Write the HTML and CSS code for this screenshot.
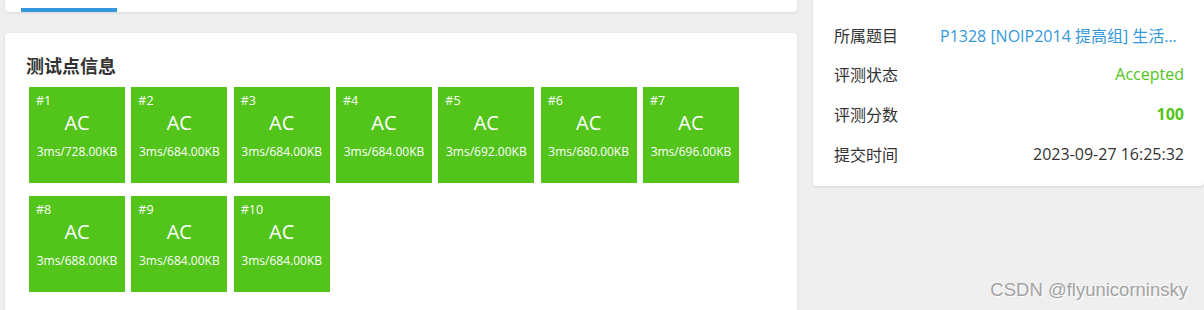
FILE: index.html
```
<!DOCTYPE html>
<html lang="zh-CN">

<head>
    <meta charset="UTF-8">
    <meta name="viewport" content="width=device-width, initial-scale=1.0">
    <title>评测详情</title>
    <link rel="stylesheet" href="styles.css">
</head>

<body>
    <div class="page">
        <div class="main">
            <div class="card tabs-card">
                <div class="tab-active"></div>
            </div>
            <div class="card cases-card">
                <h3 class="cases-title">测试点信息</h3>
                <div class="cases">
                    <div class="case"><div class="case-no">#1</div><div class="case-status">AC</div><div class="case-info">3ms/728.00KB</div></div>
                    <div class="case"><div class="case-no">#2</div><div class="case-status">AC</div><div class="case-info">3ms/684.00KB</div></div>
                    <div class="case"><div class="case-no">#3</div><div class="case-status">AC</div><div class="case-info">3ms/684.00KB</div></div>
                    <div class="case"><div class="case-no">#4</div><div class="case-status">AC</div><div class="case-info">3ms/684.00KB</div></div>
                    <div class="case"><div class="case-no">#5</div><div class="case-status">AC</div><div class="case-info">3ms/692.00KB</div></div>
                    <div class="case"><div class="case-no">#6</div><div class="case-status">AC</div><div class="case-info">3ms/680.00KB</div></div>
                    <div class="case"><div class="case-no">#7</div><div class="case-status">AC</div><div class="case-info">3ms/696.00KB</div></div>
                    <div class="case"><div class="case-no">#8</div><div class="case-status">AC</div><div class="case-info">3ms/688.00KB</div></div>
                    <div class="case"><div class="case-no">#9</div><div class="case-status">AC</div><div class="case-info">3ms/684.00KB</div></div>
                    <div class="case"><div class="case-no">#10</div><div class="case-status">AC</div><div class="case-info">3ms/684.00KB</div></div>
                </div>
            </div>
        </div>
        <div class="side">
            <div class="card info-card">
                <div class="info-row">
                    <span class="info-label">所属题目</span>
                    <a class="info-value link" href="#">P1328 [NOIP2014 提高组] 生活大爆炸版石头剪刀布</a>
                </div>
                <div class="info-row">
                    <span class="info-label">评测状态</span>
                    <span class="info-value ok">Accepted</span>
                </div>
                <div class="info-row">
                    <span class="info-label">评测分数</span>
                    <span class="info-value ok score">100</span>
                </div>
                <div class="info-row">
                    <span class="info-label">提交时间</span>
                    <span class="info-value">2023-09-27 16:25:32</span>
                </div>
            </div>
        </div>
    </div>
    <div class="watermark">CSDN @flyunicorninsky</div>
</body>

</html>
```

FILE: styles.css
```
html, body {
    height: 100%;
}

body {
    margin: 0;
    background-color: #efefef;
    font-family: "Open Sans", "Noto Sans CJK SC", sans-serif;
    color: #333;
    overflow: hidden;
}

.page {
    display: flex;
    align-items: flex-start;
    padding-left: 5px;
    gap: 16px;
}

.main {
    width: 792px;
    flex-shrink: 0;
}

.side {
    width: 391px;
    flex-shrink: 0;
}

.card {
    background-color: #fff;
    border-radius: 4px;
    box-shadow: 0 1px 3px 0 rgba(0, 0, 0, .1);
}

.tabs-card {
    margin-top: -10px;
    padding: 10px 16px 0;
    box-sizing: border-box;
    height: 22px;
    display: flex;
    align-items: flex-end;
}

.tab-active {
    width: 96px;
    height: 4px;
    background-color: #3498db;
}

.cases-card {
    margin-top: 21px;
    padding: 20px 22px 30px;
    height: 300px;
}

.cases-title {
    margin: 0 0 10px -1px;
    font-family: "Noto Sans CJK SC", sans-serif;
    font-size: 18px;
    font-weight: bold;
    line-height: 24px;
    color: #333;
}

.cases {
    display: flex;
    flex-wrap: wrap;
    column-gap: 6.33px;
    row-gap: 13px;
    margin-left: 2px;
    width: 720px;
}

.case {
    width: 96px;
    height: 96px;
    box-sizing: border-box;
    padding: 6px 7px 0;
    background-color: #52c41a;
    color: #fff;
}

.case-no {
    font-size: 12.5px;
    line-height: 16px;
}

.case-status {
    margin-top: 1px;
    font-size: 20px;
    line-height: 26px;
    text-align: center;
}

.case-info {
    margin: 8px -7px 0;
    font-size: 12px;
    line-height: 16px;
    text-align: center;
}

.info-card {
    margin-top: -10px;
    padding: 25px 20px 13px 21px;
}

.info-row {
    display: flex;
    align-items: center;
    height: 39.6px;
    font-size: 16px;
}

.info-label {
    width: 106px;
    flex-shrink: 0;
    font-family: "Noto Sans CJK SC", sans-serif;
    color: #333;
}

.info-value {
    flex: 1;
    min-width: 0;
    text-align: right;
    white-space: nowrap;
    overflow: hidden;
    text-overflow: ellipsis;
    color: #333;
}

.link {
    color: #3498db;
    text-decoration: none;
}

.ok {
    color: #52c41a;
}

.score {
    font-weight: bold;
}

.watermark {
    position: absolute;
    right: 16px;
    top: 279px;
    font-family: "Liberation Sans", sans-serif;
    font-size: 18.5px;
    color: #a3a3a3;
    text-shadow: 1px 1px 1px #fff;
}
```
